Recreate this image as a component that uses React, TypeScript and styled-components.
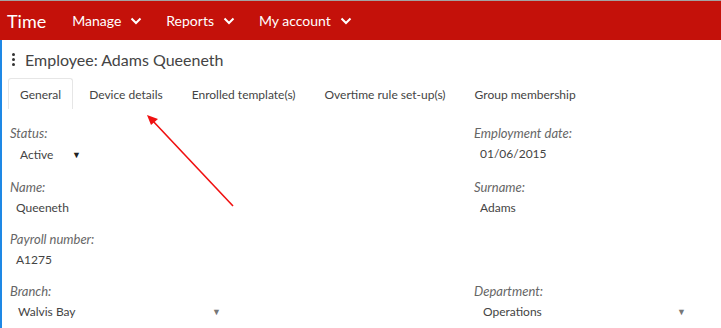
import React from 'react';
import styled, { createGlobalStyle } from 'styled-components';

const GlobalStyle = createGlobalStyle`
  html, body {
    margin: 0;
    padding: 0;
    background: #fff;
    font-family: 'Lato', 'Liberation Sans', Arial, sans-serif;
  }
`;

const Page = styled.div`
  position: relative;
  width: 721px;
  height: 328px;
  overflow: hidden;
  border-top: 1px solid #a3a3a3;
  box-sizing: border-box;
`;

const TopBar = styled.div`
  display: flex;
  align-items: center;
  height: 39px;
  background: #c4110a;
  color: #fff;
  padding-left: 7px;
`;

const Brand = styled.span`
  font-size: 18px;
  margin-right: 26px;
`;

const NavItem = styled.span`
  display: flex;
  align-items: center;
  gap: 9px;
  font-size: 14px;
  margin-right: 24px;
`;

const Content = styled.div`
  border-left: 2px solid #1e88e5;
  height: 288px;
`;

const TitleRow = styled.div`
  display: flex;
  align-items: center;
  height: 38px;
  padding-left: 10px;
  color: #444;
  font-size: 16px;
`;

const Dots = styled.span`
  display: flex;
  flex-direction: column;
  gap: 2px;
  margin-right: 10px;
  span {
    width: 3px;
    height: 3px;
    border-radius: 50%;
    background: #333;
  }
`;

const Tabs = styled.div`
  display: flex;
  padding-left: 6px;
  height: 30px;
`;

const Tab = styled.div<{ $active?: boolean }>`
  display: flex;
  align-items: center;
  padding: 0 11px;
  margin-right: ${(p) => (p.$active ? 4 : 5)}px;
  font-size: 12px;
  color: #444;
  border: 1px solid ${(p) => (p.$active ? '#e6e6e6' : 'transparent')};
  border-bottom: none;
  border-radius: 3px 3px 0 0;
  height: 30px;
`;

const Form = styled.div`
  display: grid;
  grid-template-columns: 464px 1fr;
  padding: 17px 0 0 8px;
  row-gap: 6px;
`;

const Field = styled.div<{ $tall?: boolean }>`
  height: ${(p) => (p.$tall ? 48 : 46)}px;
`;

const Label = styled.div`
  font-style: italic;
  font-size: 13px;
  color: #666;
  line-height: 16px;
`;

const Value = styled.div<{ $indent?: number; $width?: number; $gap?: number }>`
  display: flex;
  align-items: center;
  justify-content: space-between;
  font-size: 12px;
  color: #444;
  line-height: 16px;
  margin-top: ${(p) => p.$gap ?? 5}px;
  padding-left: ${(p) => p.$indent ?? 6}px;
  width: ${(p) => (p.$width ? `${p.$width}px` : 'auto')};
  box-sizing: border-box;
`;

const Caret = styled.span<{ $dark?: boolean }>`
  font-size: 9px;
  color: ${(p) => (p.$dark ? '#222' : '#777')};
`;

const Chevron = () => (
  <svg width="12" height="8" viewBox="0 0 12 8">
    <path d="M1.5 1.5 L6 6 L10.5 1.5" fill="none" stroke="#fff" strokeWidth="2" />
  </svg>
);

const Arrow = styled.svg`
  position: absolute;
  left: 0;
  top: 0;
  pointer-events: none;
`;

export default function App() {
  return (
    <Page>
      <GlobalStyle />
      <TopBar>
        <Brand>Time</Brand>
        <NavItem>
          Manage <Chevron />
        </NavItem>
        <NavItem>
          Reports <Chevron />
        </NavItem>
        <NavItem>
          My account <Chevron />
        </NavItem>
      </TopBar>
      <Content>
        <TitleRow>
          <Dots>
            <span />
            <span />
            <span />
          </Dots>
          Employee: Adams Queeneth
        </TitleRow>
        <Tabs>
          <Tab $active>General</Tab>
          <Tab>Device details</Tab>
          <Tab>Enrolled template(s)</Tab>
          <Tab>Overtime rule set-up(s)</Tab>
          <Tab>Group membership</Tab>
        </Tabs>
        <Form>
          <Field $tall>
            <Label>Status:</Label>
            <Value $indent={10} $width={71} $gap={6}>
              Active <Caret $dark>▼</Caret>
            </Value>
          </Field>
          <Field $tall>
            <Label>Employment date:</Label>
            <Value>01/06/2015</Value>
          </Field>
          <Field>
            <Label>Name:</Label>
            <Value>Queeneth</Value>
          </Field>
          <Field>
            <Label>Surname:</Label>
            <Value>Adams</Value>
          </Field>
          <Field>
            <Label>Payroll number:</Label>
            <Value>A1275</Value>
          </Field>
          <Field />
          <Field>
            <Label>Branch:</Label>
            <Value $indent={8} $width={211}>
              Walvis Bay <Caret>▼</Caret>
            </Value>
          </Field>
          <Field>
            <Label>Department:</Label>
            <Value $indent={9} $width={212}>
              Operations <Caret>▼</Caret>
            </Value>
          </Field>
        </Form>
      </Content>
      <Arrow width="721" height="328" viewBox="0 0 721 328">
        <line x1="233" y1="205" x2="152" y2="119" stroke="#f01010" strokeWidth="1.6" />
        <polygon points="147,114 158,118 151,124" fill="#f01010" />
      </Arrow>
    </Page>
  );
}
